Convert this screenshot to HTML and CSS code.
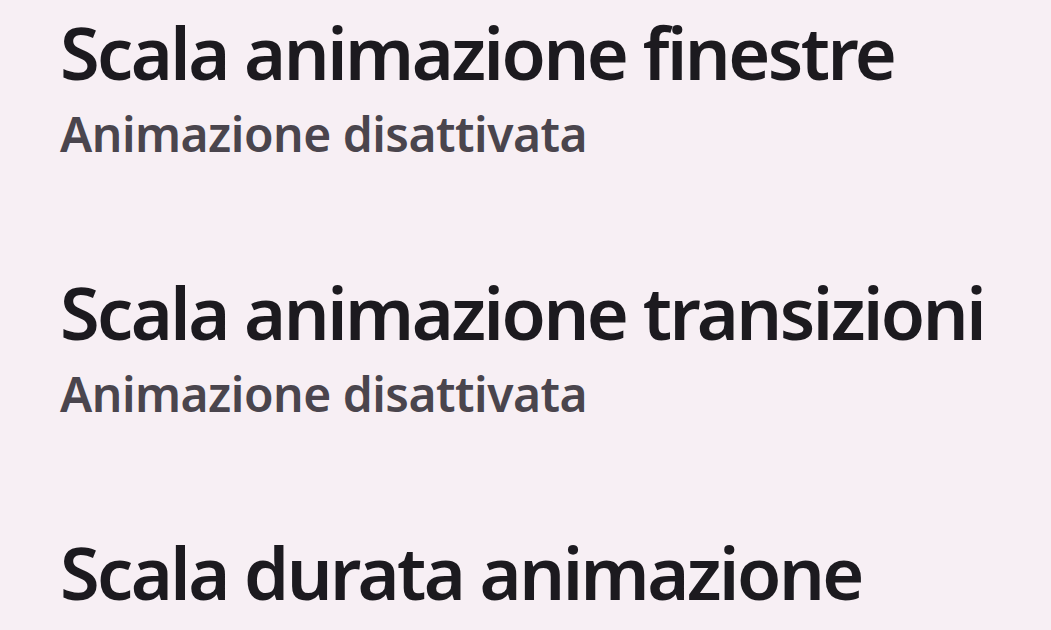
FILE: index.html
```html
<!DOCTYPE html>
<html lang="it">
<head>
<meta charset="utf-8">
<title>Opzioni sviluppatore</title>
<link rel="stylesheet" href="styles.css">
</head>
<body>
<main class="list">
  <div class="item">
    <div class="title">Scala animazione finestre</div>
    <div class="summary">Animazione disattivata</div>
  </div>
  <div class="item">
    <div class="title">Scala animazione transizioni</div>
    <div class="summary">Animazione disattivata</div>
  </div>
  <div class="item">
    <div class="title">Scala durata animazione</div>
  </div>
</main>
</body>
</html>
```
FILE: styles.css
```css
html, body {
  margin: 0;
  padding: 0;
  background: #f7eff4;
  height: 100%;
  overflow: hidden;
}
.list {
  display: flex;
  flex-direction: column;
  gap: 97px;
  padding: 9px 0 0 60px;
  font-family: "Noto Sans", "DejaVu Sans", sans-serif;
}
.item {
  display: flex;
  flex-direction: column;
}
.title {
  font-size: 72px;
  font-weight: 600;
  line-height: 86px;
  color: #1c1a1f;
  letter-spacing: -2.5px;
  white-space: nowrap;
}
.summary {
  font-size: 48px;
  font-weight: 600;
  line-height: 77px;
  color: #4a454d;
  letter-spacing: -0.5px;
  white-space: nowrap;
}
```
